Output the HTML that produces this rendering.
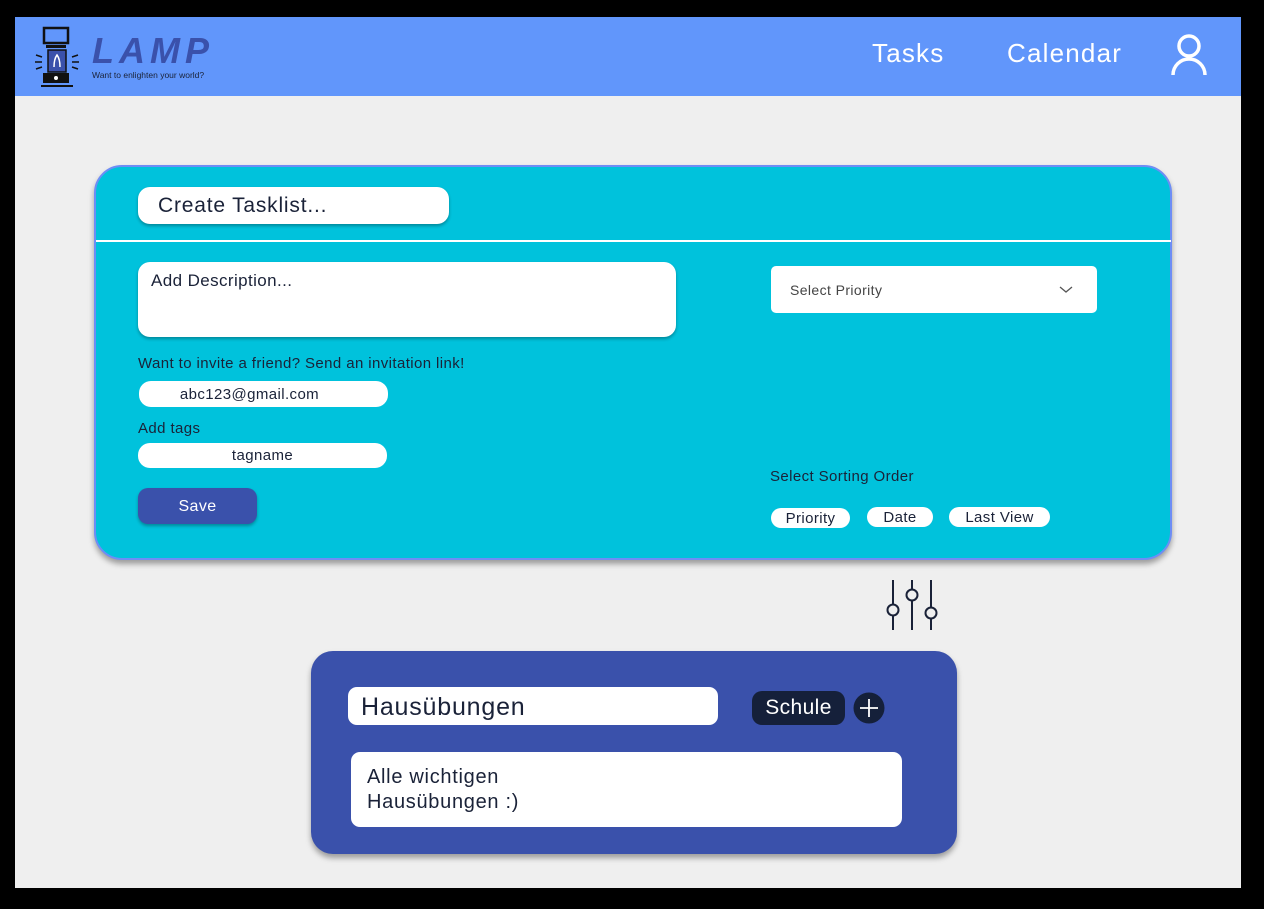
<!DOCTYPE html>
<html><head><meta charset="utf-8">
<style>
*{margin:0;padding:0;box-sizing:border-box}
body{width:1264px;height:909px;background:#000;position:relative;overflow:hidden;font-family:"Liberation Sans",sans-serif;color:#1a2238;letter-spacing:0.4px}
.page{position:absolute;left:15px;top:17px;width:1226px;height:871px;background:#efefef}
.hdr{position:absolute;left:15px;top:17px;width:1226px;height:79px;background:#6196fb}
.abs{position:absolute}
.nav{position:absolute;top:38px;color:#fff;font-size:26px;letter-spacing:1.2px}
.card{position:absolute;left:94px;top:165px;width:1078px;height:395px;background:#00c2dc;border:2px solid #6e8df5;border-radius:28px;box-shadow:0 4px 6px rgba(0,0,0,.35)}
.w{position:absolute;background:#fff;border-radius:12px}
.pill{position:absolute;background:#fff;border-radius:12px;font-size:15px;text-align:center;line-height:24px}
.card2{position:absolute;left:311px;top:651px;width:646px;height:203px;background:#3a51ab;border-radius:22px;box-shadow:0 4px 6px rgba(0,0,0,.35)}
</style></head><body>
<div class="page"></div>
<div class="hdr"></div>
<svg class="abs" style="left:34px;top:25px" width="46" height="64" viewBox="0 0 46 64">
<rect x="10" y="3" width="24" height="15" fill="none" stroke="#111" stroke-width="2.5"/>
<rect x="12" y="20" width="20" height="3" fill="#111"/>
<rect x="14" y="25" width="18" height="22" fill="#3a51ab" stroke="#111" stroke-width="1.5"/>
<path d="M20 42 Q20 34 23 30 Q26 34 26 42" fill="none" stroke="#fff" stroke-width="1.5"/>
<rect x="9" y="48" width="26" height="10" fill="#111"/><circle cx="22" cy="53" r="2" fill="#fff"/>
<rect x="7" y="60" width="32" height="2" fill="#111"/>
<path d="M2 30l6 2M1 37h7M2 44l6-2M44 30l-6 2M45 37h-7M44 44l-6-2" stroke="#111" stroke-width="1.5"/>
</svg>
<div class="abs" style="left:92px;top:31px;font-size:36px;font-style:italic;color:#3a51ab;letter-spacing:5px;font-weight:bold;line-height:40px">LAMP</div>
<div class="abs" style="left:92px;top:70px;font-size:8.5px;color:#1a2238;letter-spacing:0">Want to enlighten your world?</div>
<div class="nav" style="left:872px">Tasks</div>
<div class="nav" style="left:1007px">Calendar</div>
<svg class="abs" style="left:1170px;top:33px" width="38" height="44" viewBox="0 0 38 44"><circle cx="19" cy="13" r="10" fill="none" stroke="#fff" stroke-width="3.5"/><path d="M3 42 A16 16 0 0 1 35 42" fill="none" stroke="#fff" stroke-width="3.5"/></svg>

<div class="card"></div>
<div class="w" style="left:138px;top:187px;width:311px;height:37px;box-shadow:0 2px 3px rgba(0,0,0,.3);font-size:21px;line-height:38px;padding-left:20px;letter-spacing:0.8px">Create Tasklist...</div>
<div class="abs" style="left:96px;top:240px;width:1075px;height:2px;background:#fff"></div>
<div class="w" style="left:138px;top:262px;width:538px;height:75px;box-shadow:0 2px 3px rgba(0,0,0,.3);font-size:17px;padding:9px 0 0 13px">Add Description...</div>
<div class="abs" style="left:138px;top:355px;font-size:15px">Want to invite a friend? Send an invitation link!</div>
<div class="pill" style="left:139px;top:381px;width:249px;height:26px;line-height:27px;padding-right:28px">abc123@gmail.com</div>
<div class="abs" style="left:138px;top:420px;font-size:15px">Add tags</div>
<div class="pill" style="left:138px;top:443px;width:249px;height:25px;line-height:26px">tagname</div>
<div class="abs" style="left:138px;top:488px;width:119px;height:36px;background:#3a51ab;border-radius:10px;color:#fff;font-size:16px;text-align:center;line-height:37px;box-shadow:0 2px 3px rgba(0,0,0,.3)">Save</div>
<div class="w" style="left:771px;top:266px;width:326px;height:47px;border-radius:5px;font-size:14px;color:#444;line-height:49px;padding-left:19px">Select Priority</div>
<svg class="abs" style="left:1059px;top:286px" width="14" height="8"><path d="M1 1l6 5 6-5" fill="none" stroke="#555" stroke-width="1.3"/></svg>
<div class="abs" style="left:770px;top:468px;font-size:15px">Select Sorting Order</div>
<div class="pill" style="left:771px;top:508px;width:79px;height:20px;line-height:21px">Priority</div>
<div class="pill" style="left:867px;top:507px;width:66px;height:20px;line-height:21px">Date</div>
<div class="pill" style="left:949px;top:507px;width:101px;height:20px;line-height:21px">Last View</div>

<svg class="abs" style="left:880px;top:578px" width="62" height="54"><g stroke="#1a2238" stroke-width="2" fill="#efefef"><path d="M13 2v50M32 2v50M51 2v50"/><circle cx="13" cy="32" r="5.5"/><circle cx="32" cy="17" r="5.5"/><circle cx="51" cy="35" r="5.5"/></g></svg>

<div class="card2"></div>
<div class="w" style="left:348px;top:687px;width:370px;height:38px;border-radius:9px;font-size:25px;line-height:40px;padding-left:13px;letter-spacing:0.8px">Hausübungen</div>
<div class="abs" style="left:752px;top:691px;width:93px;height:34px;background:#15203a;border-radius:10px;color:#fff;font-size:21px;text-align:center;line-height:34px">Schule</div>
<svg class="abs" style="left:853px;top:692px" width="32" height="32"><circle cx="16" cy="16" r="15.5" fill="#15203a"/><path d="M16 7v18M7 16h18" stroke="#fff" stroke-width="1.8"/></svg>
<div class="w" style="left:351px;top:752px;width:551px;height:75px;border-radius:9px;font-size:20px;line-height:25px;padding:13px 0 0 16px;letter-spacing:0.7px">Alle wichtigen<br>Hausübungen :)</div>
</body></html>
